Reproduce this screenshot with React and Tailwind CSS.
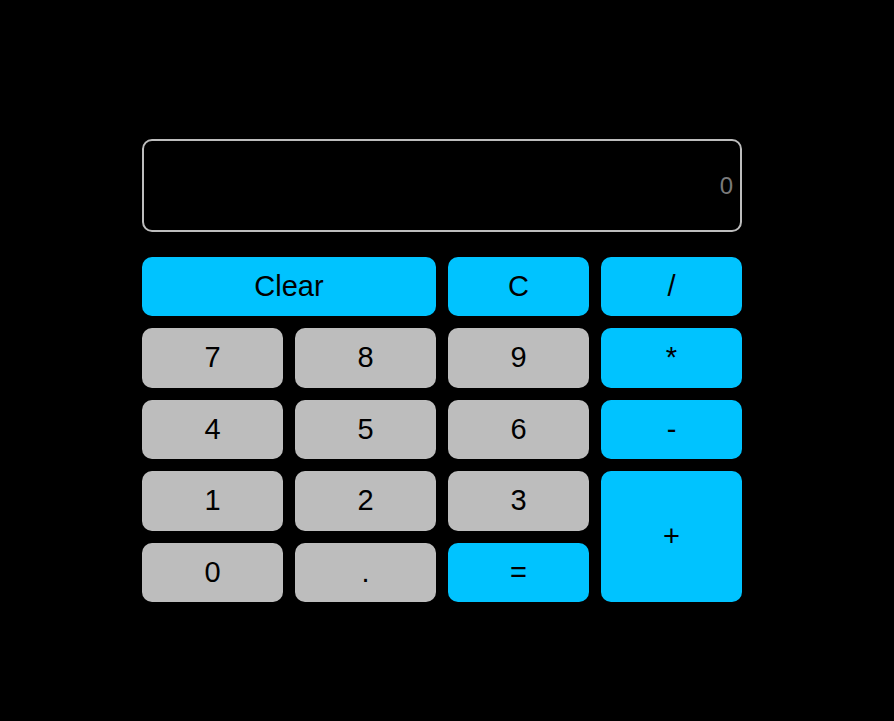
import React, { useState } from "react";

const keys = [
  { label: "Clear", span: "col-span-2", op: true },
  { label: "C", op: true },
  { label: "/", op: true },
  { label: "7" },
  { label: "8" },
  { label: "9" },
  { label: "*", op: true },
  { label: "4" },
  { label: "5" },
  { label: "6" },
  { label: "-", op: true },
  { label: "1" },
  { label: "2" },
  { label: "3" },
  { label: "+", span: "row-span-2", op: true },
  { label: "0" },
  { label: "." },
  { label: "=", op: true },
];

function App() {
  const [value] = useState("0");

  return (
    <div
      className="min-h-[721px] w-full bg-black pt-[139px] pl-[142px]"
      style={{ fontFamily: '"Liberation Sans", Arial, sans-serif' }}
    >
      <div className="w-[600px]">
        {/* Display */}
        <div className="flex h-[93px] items-center justify-end rounded-[10px] border-2 border-[#bdbdbd] bg-black pr-[7px] text-[24px] text-[#7a7a7a]">
          {value}
        </div>

        {/* Keys */}
        <div className="mt-[25px] grid grid-cols-[repeat(4,141px)] grid-rows-[repeat(5,59.4px)] gap-[12px]">
          {keys.map((k) => (
            <button
              key={k.label}
              className={`flex items-center justify-center rounded-[10px] text-[29px] text-black ${
                k.op ? "bg-[#00c3ff]" : "bg-[#bdbdbd]"
              } ${k.span || ""}`}
            >
              {k.label}
            </button>
          ))}
        </div>
      </div>
    </div>
  );
}

export default App;
